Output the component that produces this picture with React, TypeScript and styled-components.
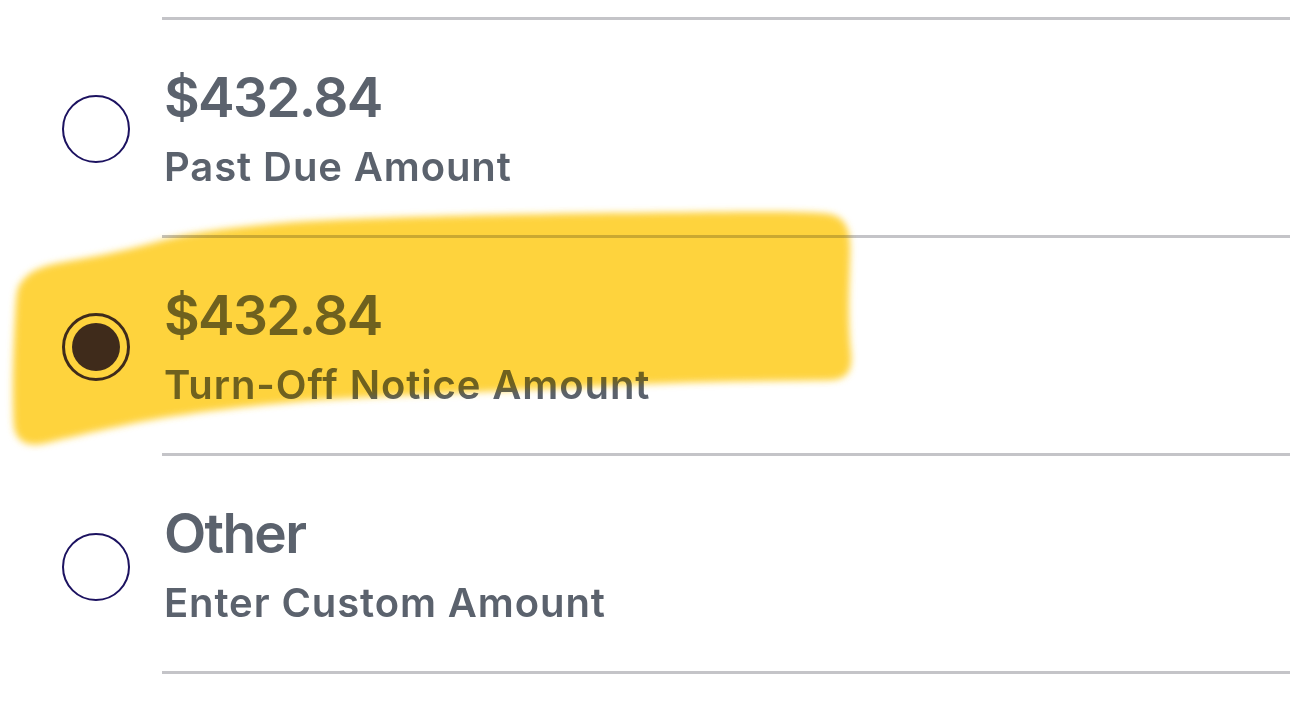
import React from "react";
import styled, { createGlobalStyle } from "styled-components";

const Global = createGlobalStyle`
  html, body { margin: 0; padding: 0; background: #ffffff; }
  body { font-family: Inter, "Noto Sans", "Liberation Sans", sans-serif; }
`;

const Page = styled.div`
  position: relative;
  width: 1290px;
  height: 728px;
  overflow: hidden;
  background: #ffffff;
`;

const List = styled.div`
  display: flex;
  flex-direction: column;
  padding-top: 17px;
`;

const Row = styled.label`
  display: flex;
  align-items: stretch;
  cursor: pointer;
  &:last-child > div:last-child {
    border-bottom: 3px solid #c4c4c8;
  }
`;

const RadioCell = styled.div`
  width: 162px;
  flex: 0 0 162px;
  display: flex;
  align-items: center;
  padding-left: 62px;
  padding-top: 6px;
  box-sizing: border-box;
`;

const Radio = styled.span<{ $checked: boolean }>`
  position: relative;
  width: 68px;
  height: 68px;
  border-radius: 50%;
  box-sizing: border-box;
  border: ${(p) => (p.$checked ? "3px solid #24185e" : "2.5px solid #1c1260")};
  &::after {
    content: "";
    display: ${(p) => (p.$checked ? "block" : "none")};
    position: absolute;
    left: 7px;
    top: 7px;
    width: 48px;
    height: 48px;
    border-radius: 50%;
    background: #24185e;
  }
`;

const Content = styled.div`
  flex: 1;
  border-top: 3px solid #c4c4c8;
  padding: 44px 0 44px 2px;
  display: flex;
  flex-direction: column;
`;

const Title = styled.div`
  font-size: 55px;
  line-height: 66px;
  font-weight: 600;
  color: #5b626d;
  letter-spacing: -1.7px;
`;

const Subtitle = styled.div`
  margin-top: 13px;
  font-size: 40px;
  line-height: 48px;
  font-weight: 600;
  color: #5b626d;
  letter-spacing: 0.9px;
`;

const Highlight = styled.svg<{ $tint?: boolean }>`
  position: absolute;
  left: 0;
  top: 0;
  width: 1290px;
  height: 728px;
  pointer-events: none;
  mix-blend-mode: ${(p) => (p.$tint ? "normal" : "multiply")};
  opacity: ${(p) => (p.$tint ? 0.12 : 1)};
`;

const options = [
  { title: "$432.84", sub: "Past Due Amount", checked: false },
  { title: "$432.84", sub: "Turn-Off Notice Amount", checked: true },
  { title: "Other", sub: "Enter Custom Amount", checked: false },
];

const strokePath =
  "M22 282 C 30 270, 45 266, 60 263 C 90 258, 120 252, 150 244 C 185 234, 220 228, 300 222 C 400 216, 550 214, 650 213 C 740 212, 800 211, 828 214 C 845 217, 850 228, 850 250 C 849 290, 847 320, 851 355 C 852 372, 846 379, 830 380 C 760 381, 680 381, 600 386 C 520 390, 420 394, 330 399 C 270 403, 210 410, 160 418 C 110 427, 75 436, 45 443 C 28 447, 16 442, 14 425 C 12 390, 14 340, 16 305 C 17 292, 18 286, 22 282 Z";

function Stroke({ tint, id }: { tint?: boolean; id: string }) {
  return (
    <Highlight $tint={tint} viewBox="0 0 1290 728">
      <defs>
        <filter id={id} x="-5%" y="-20%" width="110%" height="140%">
          <feGaussianBlur stdDeviation="3.5" />
        </filter>
      </defs>
      <path filter={`url(#${id})`} fill="#fed33d" d={strokePath} />
    </Highlight>
  );
}

export default function App() {
  return (
    <Page>
      <Global />
      <List>
        {options.map((o, i) => (
          <Row key={i}>
            <RadioCell>
              <Radio $checked={o.checked} />
            </RadioCell>
            <Content>
              <Title>{o.title}</Title>
              <Subtitle>{o.sub}</Subtitle>
            </Content>
          </Row>
        ))}
      </List>
      <Stroke id="soft-a" />
      <Stroke id="soft-b" tint />
    </Page>
  );
}
